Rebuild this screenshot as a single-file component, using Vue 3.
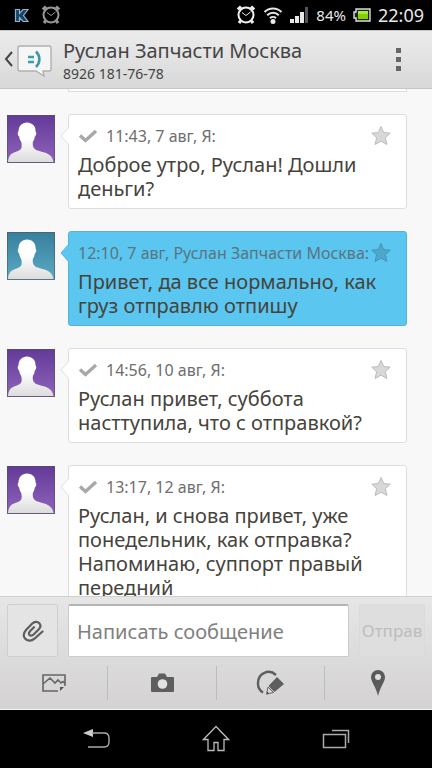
<template>
  <div class="screen">
    <div class="status-bar">
      <div class="status-left">
        <svg class="icon-k" width="15" height="15" viewBox="0 0 15 15">
          <path d="M1.500 1.500h4v4l3.500-4h5L9.500 7.500l4.500 6H9L5.500 9.500v4h-4z" fill="#164468" stroke="#8fb4cc" stroke-width="1.200" />
        </svg>
        <svg class="icon-alarm dim" width="20" height="20" viewBox="0 0 20 20">
          <circle cx="10" cy="10" r="7.500" />
          <path class="bells" d="M1.800 4.500l3.200-3M18.200 4.500l-3.200-3M4.500 16l-1.500 2M15.500 16l1.500 2" />
          <path class="hands" d="M6 7.500l4 3 4.500-3.500" />
        </svg>
      </div>
      <div class="status-right">
        <svg class="icon-alarm" width="20" height="20" viewBox="0 0 20 20">
          <circle cx="10" cy="10" r="7.500" />
          <path class="bells" d="M1.800 4.500l3.200-3M18.200 4.500l-3.200-3M4.500 16l-1.500 2M15.500 16l1.500 2" />
          <path class="hands" d="M6 7.500l4 3 4.500-3.500" />
        </svg>
        <svg class="icon-wifi" width="20" height="18" viewBox="0 0 20 18" fill="none" stroke="#e6e6e6" stroke-width="2">
          <path d="M1.500 6a12 12 0 0 1 17 0M4.200 9.200a8.200 8.200 0 0 1 11.600 0M7 12.200a4.400 4.400 0 0 1 6 0" />
          <circle cx="10" cy="15.500" r="1.500" fill="#fff" />
        </svg>
        <svg class="icon-signal" width="19" height="18" viewBox="0 0 19 18" fill="#e8e8e8">
          <path d="M0 13h4v4H0zM5 10h4v7H5zM10 6h4v11h-4z" />
          <path d="M15 1h3v16h-3z" fill="#555" />
        </svg>
        <span class="battery-text">84%</span>
        <svg class="icon-battery" width="18" height="14" viewBox="0 0 18 14">
          <path d="M3 1h14v12H3v-3H1V4h2z" fill="#222" stroke="#ddd" stroke-width="1.400" />
          <path d="M5 3h10v8H5z" fill="#82d000" />
          <path d="M5 3h10v3H5z" fill="#a6ec35" />
        </svg>
        <span class="clock">22:09</span>
      </div>
    </div>

    <header class="header">
      <button class="back" aria-label="Назад">
        <svg width="48" height="36" viewBox="0 0 48 36">
          <path d="M8 10l-6 7 6 7" fill="none" stroke="#444" stroke-width="2" />
          <path d="M16 4h29a2 2 0 0 1 2 2v21a2 2 0 0 1-2 2h-6l1 5-8-5H16a2 2 0 0 1-2-2V6a2 2 0 0 1 2-2z" fill="#f6f6f6" stroke="#b0b0b0" stroke-width="1.400" />
          <path d="M24 15h6M24 20h6" stroke="#3a9eab" stroke-width="2.400" />
          <path d="M32 9.500c4.500 4.500 4.500 11 0 15.500" fill="none" stroke="#3f98a5" stroke-width="2.600" />
        </svg>
      </button>
      <div class="contact">
        <h1 class="contact-name">Руслан Запчасти Москва</h1>
        <div class="contact-phone">8926 181-76-78</div>
      </div>
      <button class="menu" aria-label="Меню">
        <span class="dot"></span>
        <span class="dot"></span>
        <span class="dot"></span>
      </button>
    </header>

    <main class="messages">
      <div class="previous"></div>
      <article v-for="msg in messages" :key="msg.id" class="message" :class="{ incoming: msg.incoming }">
        <svg class="avatar" width="48" height="48" viewBox="0 0 48 48">
          <defs>
            <linearGradient :id="'bg' + msg.id" x1="0" y1="0" x2="0" y2="1">
              <stop offset="0" :stop-color="msg.incoming ? '#367f9d' : '#623a98'" />
              <stop offset="1" :stop-color="msg.incoming ? '#5babc5' : '#9064bb'" />
            </linearGradient>
            <linearGradient :id="'man' + msg.id" x1="0" y1="0" x2="0" y2="1">
              <stop offset="0.4" stop-color="#fff" />
              <stop offset="1" stop-color="#dcdcdc" />
            </linearGradient>
          </defs>
          <rect width="48" height="48" :fill="'url(#bg' + msg.id + ')'" />
          <path
            d="M1 47c.5-5 2-8 6-9.500 4-1.500 7-2.500 7.500-5 .3-2 .2-4-.5-6-1-1-1.500-3-1.800-5-1.500-.5-2-4.500-.7-5C11.500 11 15 7.500 20 7.500S29 11 28.500 16.500c1.300.5.800 4.500-.7 5-.3 2-.8 4-1.800 5-.5 2-.3 4 .5 6 1.500 2.500 4 3 9 4.500 6 1.500 10 4 11 10z"
            :fill="'url(#man' + msg.id + ')'"
          />
          <rect x=".5" y=".5" width="47" height="47" fill="none" stroke="#555" stroke-opacity=".6" />
        </svg>
        <div class="bubble">
          <svg class="tail" width="9" height="18" viewBox="0 0 9 18">
            <path d="M9 0L1 9l8 9" />
          </svg>
          <div class="meta">
            <svg v-if="!msg.incoming" class="check" width="20" height="16" viewBox="0 0 20 16">
              <path d="M2 7.500l5.500 5L18 3" fill="none" stroke="#a8a8a8" stroke-width="3.400" />
            </svg>
            <span class="meta-text">{{ msg.meta }}</span>
            <button class="star" aria-label="В избранное">
              <svg width="22" height="22" viewBox="0 0 22 22">
                <path d="M11 1.500l2.700 6 6.500.7-4.800 4.500 1.500 6.800-5.900-3.300-5.900 3.300 1.500-6.800L1.800 8.200l6.500-.7z" />
              </svg>
            </button>
          </div>
          <p class="text">{{ msg.text }}</p>
        </div>
      </article>
    </main>

    <footer class="composer">
      <form class="compose-row" @submit.prevent>
        <button type="button" class="attach" aria-label="Прикрепить">
          <svg width="24" height="24" viewBox="0 0 24 24" fill="none" stroke="#5e5e5e" stroke-width="2.200" stroke-linecap="round">
            <path d="M21.500 12.500l-8 7.200c-3.500 3-7.500 2.300-9.500-.2s-1.500-5.500 1-8.500l6-6.300c2.500-2.300 5.500-2.500 7.300-.5s1.300 4.300-.7 6.300l-5 5c-1.500 1.500-3.300 1.500-4.200.3s-.5-2.500.8-3.800l3.800-3.800" />
          </svg>
        </button>
        <input v-model="draft" class="field" type="text" placeholder="Написать сообщение" aria-label="Написать сообщение" />
        <button class="send" disabled>Отправ</button>
      </form>
      <div class="tools">
        <button class="tool" type="button" aria-label="Изображение">
          <svg width="26" height="22" viewBox="0 0 26 22" fill="none" stroke="#666" stroke-width="1.600">
            <path d="M17 19H2V3h22v11M2 12l7-6 5 5 3-3 3 3 2-1.500 2 2" />
            <path d="M19 19v-4h4z" fill="#555" stroke="none" />
          </svg>
        </button>
        <button class="tool" type="button" aria-label="Камера">
          <svg width="26" height="22" viewBox="0 0 26 22">
            <path d="M3 5h5l2-3.500h6L18 5h6q1 0 1 1v13q0 1-1 1H3q-1 0-1-1V6q0-1 1-1z" fill="#5e5e5e" />
            <circle cx="13.500" cy="12" r="4.800" fill="#e2e2e2" />
          </svg>
        </button>
        <button class="tool" type="button" aria-label="Рисунок">
          <svg width="30" height="26" viewBox="0 0 30 26">
            <path d="M8 22.500A10.500 10.500 0 0 1 3 13C3 3 14-1.500 21 5" fill="none" stroke="#5e5e5e" stroke-width="2.400" />
            <path d="M22 7l7 7-9.500 8-6-6z" fill="#5e5e5e" />
            <path d="M13 17l-1.500 7 7-1.500z" fill="none" stroke="#666" />
            <path d="M11.500 24.500l.8-3 2 2.200z" fill="#555" />
          </svg>
        </button>
        <button class="tool" type="button" aria-label="Местоположение">
          <svg width="16" height="28" viewBox="0 0 16 28">
            <path d="M8 1a7 7 0 0 1 7 7c0 5-5 10-7 19C6 18 1 13 1 8a7 7 0 0 1 7-7z" fill="#5a5a5a" />
            <circle cx="8" cy="8" r="3" fill="#dedede" />
          </svg>
        </button>
      </div>
    </footer>

    <nav class="nav-bar">
      <button class="nav-button" aria-label="Назад">
        <svg width="28" height="22" viewBox="0 0 28 22">
          <path d="M1 5l10-4v8z" fill="#ccc" />
          <path d="M10 5h12q5 0 5 5v4q0 5-5 5H6" fill="none" stroke="#aaa" stroke-width="1.400" />
        </svg>
      </button>
      <button class="nav-button" aria-label="Домой">
        <svg width="28" height="28" viewBox="0 0 28 28" fill="none" stroke="#bbb" stroke-width="1.300">
          <path d="M14 1.500L1.500 14.500H6v11h6v-8h4v8h6v-11h4.500z" />
        </svg>
      </button>
      <button class="nav-button" aria-label="Недавние">
        <svg width="28" height="20" viewBox="0 0 28 20" fill="none" stroke="#aaa" stroke-width="1.500">
          <path d="M1.500 5.500h22v13h-22zM10 1.500h16.500V14" />
        </svg>
      </button>
    </nav>
  </div>
</template>

<script setup>
import { ref } from 'vue';

const draft = ref('');

const messages = ref([
  { id: 1, incoming: false, meta: '11:43, 7 авг, Я:', text: 'Доброе утро, Руслан! Дошли деньги?' },
  { id: 2, incoming: true, meta: '12:10, 7 авг, Руслан Запчасти Москва:', text: 'Привет, да все нормально, как груз отправлю отпишу' },
  { id: 3, incoming: false, meta: '14:56, 10 авг, Я:', text: 'Руслан привет, суббота насттупила, что с отправкой?' },
  { id: 4, incoming: false, meta: '13:17, 12 авг, Я:', text: 'Руслан, и снова привет, уже понедельник, как отправка? Напоминаю, суппорт правый передний' },
]);
</script>

<style>
body {
  margin: 0;
  background: #000;
}
</style>

<style scoped>
.screen {
  display: flex;
  flex-direction: column;
  height: 100vh;
  overflow: hidden;
  font-family: "Noto Sans", "Open Sans", sans-serif;
  color: #45433b;
}

.screen * {
  box-sizing: border-box;
}

button {
  padding: 0;
  border: 0;
  background: none;
  font-family: inherit;
}

svg {
  display: block;
  flex: none;
}

/* status bar */
.status-bar {
  display: flex;
  justify-content: space-between;
  flex: none;
  height: 30px;
  padding: 0 8px 0 14px;
  background: #000;
  color: #e8e8e8;
}

.status-left,
.status-right {
  display: flex;
  align-items: center;
}

.status-left {
  gap: 12px;
}

.status-right {
  gap: 7px;
}

.icon-alarm {
  fill: none;
  stroke: #f0f0f0;
  stroke-width: 2;
}

.icon-alarm .bells {
  stroke-width: 3;
}

.icon-alarm .hands {
  stroke-width: 1;
}

.icon-alarm.dim {
  stroke: #999;
}

.battery-text {
  font-size: 15px;
}

.clock {
  font-size: 18px;
}

/* header */
.header {
  display: flex;
  flex: none;
  height: 59px;
  padding: 0 4px;
  background: linear-gradient(#ececec, #d8d8d8);
  border-top: 1px solid #c8c8c8;
  border-bottom: 1px solid #c6c6c6;
}

.back {
  display: flex;
  align-items: center;
}

.contact {
  flex: 1;
  padding: 6px 0 0 11px;
}

.contact-name {
  margin: 0;
  font-size: 20px;
  line-height: 27px;
  font-weight: 400;
  color: #444;
}

.contact-phone {
  font-size: 14px;
  line-height: 20px;
  color: #444;
}

.menu {
  display: flex;
  flex-direction: column;
  align-items: center;
  justify-content: center;
  gap: 4px;
  width: 60px;
}

.dot {
  width: 5px;
  height: 5px;
  background: #666;
}

/* messages */
.messages {
  flex: 1;
  min-height: 0;
  overflow: hidden;
  padding: 0 25px 0 7px;
  background: #f8f8f8;
}

.previous {
  height: 3px;
  margin-left: 61px;
  margin-bottom: 22px;
  background: #fff;
  border: 1px solid #ddd;
  border-top: 0;
}

.message {
  display: flex;
  gap: 13px;
  margin-bottom: 22px;
}

.avatar {
  margin-top: 1px;
}

.bubble {
  position: relative;
  flex: 1;
  min-width: 0;
  padding: 9px 14px 7px 9px;
  background: #fff;
  border: 1px solid #dedede;
  border-radius: 3px;
}

.tail {
  position: absolute;
  top: 12px;
  left: -9px;
  fill: #fff;
  stroke: #dedede;
}

.meta {
  display: flex;
  align-items: center;
  height: 24px;
  font-size: 16px;
  color: #6e6e6e;
  white-space: nowrap;
}

.check {
  margin-right: 8px;
}

.meta-text {
  flex: 1;
  min-width: 0;
}

.star svg {
  fill: #d8d8d8;
  stroke: #bcbcbc;
}

.text {
  margin: 5px 0 0;
  font-size: 20px;
  line-height: 24px;
}

.incoming .bubble {
  background: #5bc6ef;
  border-color: #55b4d8;
}

.incoming .tail {
  fill: #5bc6ef;
  stroke: #55b4d8;
}

.incoming .meta {
  color: #5a7480;
}

.incoming .star svg {
  fill: #4fa6cb;
  stroke: #4396bb;
}

/* composer */
.composer {
  flex: none;
  padding-top: 7px;
  background: linear-gradient(#e6e6e6, #d4d2d3);
  border-top: 1px solid #d0d0d0;
  border-bottom: 1px solid #f5f5f5;
}

.compose-row {
  display: flex;
  gap: 10px;
  padding: 0 7px;
}

.attach,
.send {
  display: flex;
  align-items: center;
  justify-content: center;
  height: 53px;
  background: #e4e4e4;
  border: 1px solid #cfcfcf;
  border-radius: 2px;
}

.attach {
  width: 51px;
}

.field {
  flex: 1;
  min-width: 0;
  height: 53px;
  padding: 0 8px;
  background: #fff;
  border: 1px solid #ccc;
  border-top: 2px solid #b5b5b5;
  border-radius: 2px;
  font-family: inherit;
  font-size: 20px;
}

.field::placeholder {
  color: #808080;
  opacity: 1;
}

.send {
  width: 66px;
  border-color: #dadada;
  background: #dedede;
  font-size: 17px;
  color: #bdbdbd;
}

.tools {
  display: flex;
  padding: 9px 0;
}

.tool {
  display: flex;
  align-items: center;
  justify-content: center;
  flex: 1;
  height: 34px;
}

.tool + .tool {
  border-left: 1px solid #bcbcbc;
}

/* system navigation */
.nav-bar {
  display: flex;
  justify-content: center;
  flex: none;
  height: 58px;
  background: #000;
}

.nav-button {
  display: flex;
  align-items: center;
  justify-content: center;
  width: 120px;
}
</style>
